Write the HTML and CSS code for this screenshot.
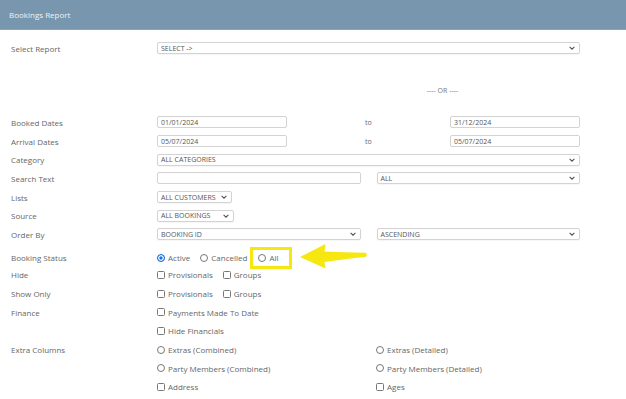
FILE: index.html
```html
<!DOCTYPE html>
<html>
<head>
<meta charset="utf-8">
<link rel="stylesheet" href="styles.css">
</head>
<body>
<div class="header">Bookings Report</div>
<div class="form">
  <div class="row first">
    <div class="label">Select Report</div>
    <div class="field"><div class="select"><span>SELECT -&gt;</span><svg class="chev" width="6" height="4" viewBox="0 0 6 4"><path d="M0.6 0.8 L3 3.2 L5.4 0.8" fill="none" stroke="#555" stroke-width="1.1"/></svg></div></div>
  </div>
  <div class="row or"><div class="label"></div><div class="field or-text">---- OR ----</div></div>
  <div class="row">
    <div class="label">Booked Dates</div>
    <div class="field dates"><input class="input" value="01/01/2024"><span class="to">to</span><input class="input" value="31/12/2024"></div>
  </div>
  <div class="row">
    <div class="label">Arrival Dates</div>
    <div class="field dates"><input class="input" value="05/07/2024"><span class="to">to</span><input class="input" value="05/07/2024"></div>
  </div>
  <div class="row">
    <div class="label">Category</div>
    <div class="field"><div class="select"><span>ALL CATEGORIES</span><svg class="chev" width="6" height="4" viewBox="0 0 6 4"><path d="M0.6 0.8 L3 3.2 L5.4 0.8" fill="none" stroke="#555" stroke-width="1.1"/></svg></div></div>
  </div>
  <div class="row">
    <div class="label">Search Text</div>
    <div class="field halves"><input class="input" value=""><div class="select"><span>ALL</span><svg class="chev" width="6" height="4" viewBox="0 0 6 4"><path d="M0.6 0.8 L3 3.2 L5.4 0.8" fill="none" stroke="#555" stroke-width="1.1"/></svg></div></div>
  </div>
  <div class="row">
    <div class="label">Lists</div>
    <div class="field"><div class="select small lists"><span>ALL CUSTOMERS</span><svg class="chev" width="6" height="4" viewBox="0 0 6 4"><path d="M0.6 0.8 L3 3.2 L5.4 0.8" fill="none" stroke="#555" stroke-width="1.1"/></svg></div></div>
  </div>
  <div class="row">
    <div class="label">Source</div>
    <div class="field"><div class="select small source"><span>ALL BOOKINGS</span><svg class="chev" width="6" height="4" viewBox="0 0 6 4"><path d="M0.6 0.8 L3 3.2 L5.4 0.8" fill="none" stroke="#555" stroke-width="1.1"/></svg></div></div>
  </div>
  <div class="row">
    <div class="label">Order By</div>
    <div class="field halves"><div class="select"><span>BOOKING ID</span><svg class="chev" width="6" height="4" viewBox="0 0 6 4"><path d="M0.6 0.8 L3 3.2 L5.4 0.8" fill="none" stroke="#555" stroke-width="1.1"/></svg></div><div class="select"><span>ASCENDING</span><svg class="chev" width="6" height="4" viewBox="0 0 6 4"><path d="M0.6 0.8 L3 3.2 L5.4 0.8" fill="none" stroke="#555" stroke-width="1.1"/></svg></div></div>
  </div>
  <div class="row status">
    <div class="label">Booking Status</div>
    <div class="field opts">
      <span class="opt"><span class="radio on"></span>Active</span>
      <span class="opt"><span class="radio"></span>Cancelled</span>
      <span class="highlight"><span class="opt"><span class="radio"></span>All</span></span>
      <svg class="arrow" width="72" height="32" viewBox="0 0 72 32"><path d="M2 17 L27.5 4 L26.5 11.5 Q47 12.5 68 12.8 Q69.5 14.8 68 16.8 Q47 19 26.5 22 L27.5 28.5 Z" fill="#f6e710"/></svg>
    </div>
  </div>
  <div class="row">
    <div class="label">Hide</div>
    <div class="field opts"><span class="opt"><span class="check"></span>Provisionals</span><span class="opt"><span class="check"></span>Groups</span></div>
  </div>
  <div class="row">
    <div class="label">Show Only</div>
    <div class="field opts"><span class="opt"><span class="check"></span>Provisionals</span><span class="opt"><span class="check"></span>Groups</span></div>
  </div>
  <div class="row">
    <div class="label">Finance</div>
    <div class="field opts"><span class="opt"><span class="check"></span>Payments Made To Date</span></div>
  </div>
  <div class="row">
    <div class="label"></div>
    <div class="field opts"><span class="opt"><span class="check"></span>Hide Financials</span></div>
  </div>
  <div class="row">
    <div class="label">Extra Columns</div>
    <div class="field cols"><span class="opt"><span class="radio"></span>Extras (Combined)</span><span class="opt"><span class="radio"></span>Extras (Detailed)</span></div>
  </div>
  <div class="row">
    <div class="label"></div>
    <div class="field cols"><span class="opt"><span class="radio"></span>Party Members (Combined)</span><span class="opt"><span class="radio"></span>Party Members (Detailed)</span></div>
  </div>
  <div class="row">
    <div class="label"></div>
    <div class="field cols"><span class="opt"><span class="check"></span>Address</span><span class="opt"><span class="check"></span>Ages</span></div>
  </div>
</div>
</body>
</html>
```
FILE: styles.css
```css
* { box-sizing: border-box; }
html, body { margin: 0; padding: 0; background: #fff; }
body {
  font-family: "Open Sans", "Liberation Sans", sans-serif;
  font-size: 8px;
  color: #666;
  width: 626px;
  height: 399px;
  overflow: hidden;
}
.header {
  height: 30px;
  background: #7896ae;
  border-bottom: 1px solid #8aa6bc;
  color: #eef3f7;
  padding-left: 9px;
  display: flex;
  align-items: center;
  font-size: 8px;
}
.form {
  padding: 9px 46px 0 11px;
}
.row {
  display: grid;
  grid-template-columns: 146px 423px;
  align-items: center;
  height: 18.7px;
}
.row.or { margin-top: 23.3px; margin-bottom: 13.3px; }
.row.status { margin-top: 3px; }
.label { color: #666; white-space: nowrap; }
.field { display: flex; align-items: center; min-width: 0; }
.or-text { justify-content: center; padding-left: 148px; color: #777; font-size: 7px; }
.select, .input {
  height: 12px;
  border: 1px solid #d3d3d3;
  border-radius: 2px;
  background: #fff;
  font-family: inherit;
  font-size: 7px;
  color: #555;
  padding: 0 3px;
  margin: 0;
  outline: none;
  white-space: nowrap;
}
.select {
  width: 100%;
  display: flex;
  align-items: center;
  justify-content: space-between;
  box-shadow: 0 1px 1px rgba(0,0,0,0.04);
  overflow: hidden;
}
.select span { white-space: nowrap; }
.select .chev { margin-right: 1px; flex: none; }
.select.small { gap: 4px; }
.select.lists { width: 75px; }
.select.source { width: 77px; }
.dates { display: grid; grid-template-columns: 130px 1fr 130px; }
.dates .input { width: 130px; }
.to { padding-left: 78px; color: #666; font-size: 7px; }
.halves { display: grid; grid-template-columns: 1fr 1fr; column-gap: 16px; }
.halves .input { width: 100%; }
.opts { gap: 10px; position: relative; }
.opt { display: inline-flex; align-items: center; gap: 3px; white-space: nowrap; }
.radio, .check {
  width: 8px; height: 8px;
  border: 1px solid #777;
  background: #fff;
  display: inline-block;
  flex: none;
}
.radio { border-radius: 50%; }
.check { border-radius: 1.5px; }
.radio.on {
  border-color: #1a73e8;
  background: #1a73e8;
  box-shadow: inset 0 0 0 1.3px #fff;
}
.highlight {
  border: 3px solid #f6e710;
  height: 22px;
  width: 42px;
  display: inline-flex;
  align-items: center;
  padding-left: 5px;
  margin-left: -7px;
}
.arrow { position: absolute; left: 141px; top: -7px; }
.cols { display: grid; grid-template-columns: 219px 1fr; }
```
